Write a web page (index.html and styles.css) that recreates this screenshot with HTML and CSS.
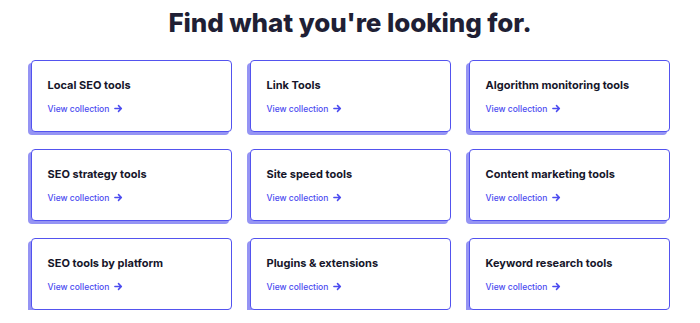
FILE: index.html
```html
<!DOCTYPE html>
<html lang="en">
<head>
<meta charset="utf-8">
<title>Find what you're looking for.</title>
<link rel="stylesheet" href="styles.css">
</head>
<body>
<main class="section">
  <h1 class="heading">Find what you're looking for.</h1>
  <div class="grid">
    <a class="card" href="#"><span class="card-title">Local SEO tools</span><span class="card-link">View collection <svg class="arrow" viewBox="0 0 10 10"><path d="M1 5h7M5 1.8L8.2 5 5 8.2"/></svg></span></a>
    <a class="card" href="#"><span class="card-title">Link Tools</span><span class="card-link">View collection <svg class="arrow" viewBox="0 0 10 10"><path d="M1 5h7M5 1.8L8.2 5 5 8.2"/></svg></span></a>
    <a class="card" href="#"><span class="card-title">Algorithm monitoring tools</span><span class="card-link">View collection <svg class="arrow" viewBox="0 0 10 10"><path d="M1 5h7M5 1.8L8.2 5 5 8.2"/></svg></span></a>
    <a class="card" href="#"><span class="card-title">SEO strategy tools</span><span class="card-link">View collection <svg class="arrow" viewBox="0 0 10 10"><path d="M1 5h7M5 1.8L8.2 5 5 8.2"/></svg></span></a>
    <a class="card" href="#"><span class="card-title">Site speed tools</span><span class="card-link">View collection <svg class="arrow" viewBox="0 0 10 10"><path d="M1 5h7M5 1.8L8.2 5 5 8.2"/></svg></span></a>
    <a class="card" href="#"><span class="card-title">Content marketing tools</span><span class="card-link">View collection <svg class="arrow" viewBox="0 0 10 10"><path d="M1 5h7M5 1.8L8.2 5 5 8.2"/></svg></span></a>
    <a class="card" href="#"><span class="card-title">SEO tools by platform</span><span class="card-link">View collection <svg class="arrow" viewBox="0 0 10 10"><path d="M1 5h7M5 1.8L8.2 5 5 8.2"/></svg></span></a>
    <a class="card" href="#"><span class="card-title">Plugins &amp; extensions</span><span class="card-link">View collection <svg class="arrow" viewBox="0 0 10 10"><path d="M1 5h7M5 1.8L8.2 5 5 8.2"/></svg></span></a>
    <a class="card" href="#"><span class="card-title">Keyword research tools</span><span class="card-link">View collection <svg class="arrow" viewBox="0 0 10 10"><path d="M1 5h7M5 1.8L8.2 5 5 8.2"/></svg></span></a>
  </div>
</main>
</body>
</html>
```
FILE: styles.css
```css
* { box-sizing: border-box; }
html, body { margin: 0; padding: 0; background: #ffffff; }
body { font-family: "Inter", "Open Sans", sans-serif; color: #1e1e32; }
.section { width: 639px; margin: 0 auto; }
.heading {
  margin: 0;
  padding-top: 6px;
  height: 60px;
  font-size: 26px;
  line-height: 33px;
  font-weight: 800;
  text-align: center;
  color: #1f1f35;
  letter-spacing: -0.1px;
}
.grid {
  display: grid;
  grid-template-columns: repeat(3, 201px);
  grid-auto-rows: 72px;
  column-gap: 18px;
  row-gap: 17px;
}
.card {
  display: flex;
  flex-direction: column;
  justify-content: center;
  gap: 11px;
  padding: 0 16px;
  border: 1px solid #5353ef;
  border-radius: 4px;
  box-shadow: -3px 3px 0 #9594f4;
  background: #fff;
  text-decoration: none;
}
.card-title {
  font-size: 11px;
  font-weight: 700;
  color: #16162a;
  line-height: 14px;
}
.card-link {
  display: flex;
  align-items: center;
  gap: 5px;
  font-size: 8.5px;
  line-height: 12px;
  font-weight: 500;
  color: #4b4bf0;
}
.arrow {
  width: 9px;
  height: 9px;
  fill: none;
  stroke: #4b4bf0;
  stroke-width: 1.7;
  stroke-linecap: round;
  stroke-linejoin: round;
}
```
